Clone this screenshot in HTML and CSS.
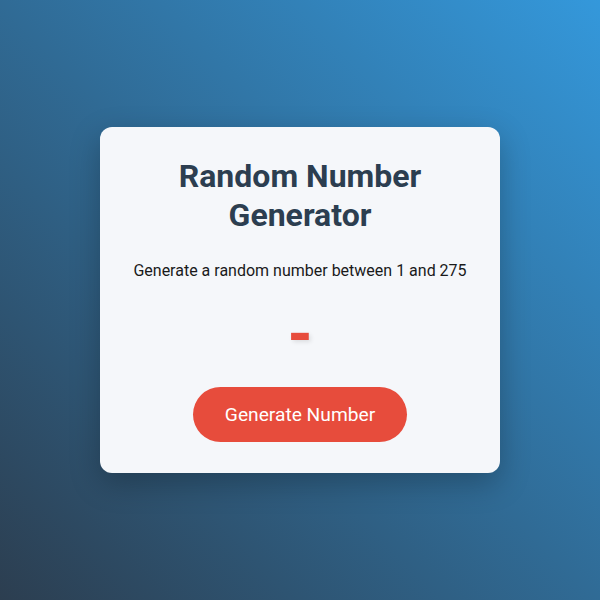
FILE: index.html
```html
<!DOCTYPE html>
<html lang="en">
<head>
    <meta charset="UTF-8">
    <meta name="viewport" content="width=device-width, initial-scale=1.0">
    <title>Random Number Generator</title>
    <link rel="stylesheet" href="styles.css">
</head>
<body>
    <div class="card">
        <h1>Random Number Generator</h1>
        <p class="hint">Generate a random number between 1 and 275</p>
        <div class="result" id="result">-</div>
        <button class="generate" id="generateBtn">Generate Number</button>
    </div>
    <script>
        const result = document.getElementById('result');
        const generateBtn = document.getElementById('generateBtn');

        generateBtn.addEventListener('click', () => {
            result.textContent = Math.floor(Math.random() * 275) + 1;
        });
    </script>
</body>
</html>
```

FILE: styles.css
```css
body {
    font-family: Roboto, "Liberation Sans", sans-serif;
    margin: 0;
    padding: 0;
    min-height: 100vh;
    display: flex;
    justify-content: center;
    align-items: center;
    background: linear-gradient(45deg, #2c3e50, #3498db);
}

.card {
    box-sizing: border-box;
    width: 400px;
    padding: 30px 30px 31px;
    background: #f5f7fa;
    border-radius: 12px;
    text-align: center;
    box-shadow: 0 10px 30px rgba(0, 0, 0, 0.25);
}

.card h1 {
    margin: 0 0 27px;
    font-size: 32px;
    line-height: 1.2;
    font-weight: bold;
    color: #2c3e50;
}

.hint {
    margin: 0;
    font-size: 16px;
    color: #1a1a1a;
}

.result {
    margin: 17px 0 15px;
    font-size: 64px;
    font-weight: bold;
    color: #e74c3c;
    text-shadow: 2px 2px 4px rgba(0, 0, 0, 0.1);
}

.generate {
    padding: 16px 32px;
    font-family: inherit;
    font-size: 1.2rem;
    color: white;
    background: #e74c3c;
    border: none;
    border-radius: 30px;
    cursor: pointer;
}

.generate:hover {
    background: #c0392b;
}
```
